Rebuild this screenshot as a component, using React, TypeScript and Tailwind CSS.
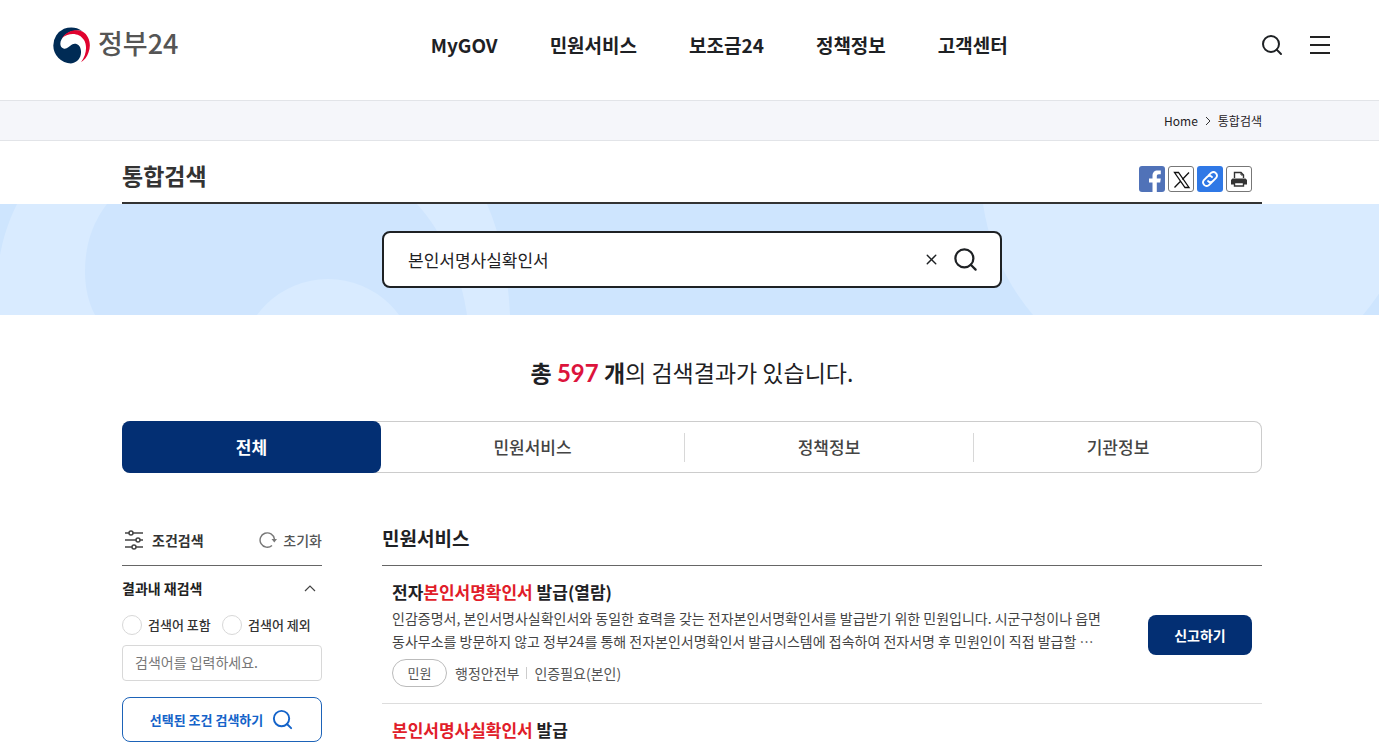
import { Search, X } from 'lucide-react';

interface Service {
  name: string;
  title: React.ReactNode;
  lines?: string[];
  agency?: string;
  note?: string;
}

const menu = ['MyGOV', '민원서비스', '보조금24', '정책정보', '고객센터'];

const services: Service[] = [
  {
    name: 'issue-online',
    title: (
      <>
        전자<em className="text-[#e11d2a] not-italic">본인서명확인서</em> 발급(열람)
      </>
    ),
    lines: [
      '인감증명서, 본인서명사실확인서와 동일한 효력을 갖는 전자본인서명확인서를 발급받기 위한 민원입니다. 시군구청이나 읍면',
      '동사무소를 방문하지 않고 정부24를 통해 전자본인서명확인서 발급시스템에 접속하여 전자서명 후 민원인이 직접 발급할 ⋯',
    ],
    agency: '행정안전부',
    note: '인증필요(본인)',
  },
  {
    name: 'issue',
    title: (
      <>
        <em className="text-[#e11d2a] not-italic">본인서명사실확인서</em> 발급
      </>
    ),
  },
];

function Logo() {
  return (
    <a href="#" className="flex items-center gap-2 text-[#555]">
      <svg className="size-[37px]" viewBox="0 0 37 37" aria-hidden="true">
        <path
          d="M29 4C24 0 17-.5 11 1.800A18.300 18.300 0 0 0 .3 18.500 18 18 0 0 0 18 36.500C24 36 28.500 31 28 24 27.500 18 23 15.500 19 17.500 15.500 19.500 14 22.500 10.500 21.500 7 20.500 6.500 16 8.500 12.500 11.500 7 19 2 29 4Z"
          fill="#002b55"
        />
        <path
          d="M9 11C14 3.500 23 1.500 29.500 4.500 36.500 8.500 38.500 18 35.500 25.500 34 30 31 33.500 28 35.200 33.500 28 34.500 19 31 13 26.500 5.500 16 5 9 11Z"
          fill="#e0032f"
        />
      </svg>
      <span className="pb-1 text-[27px] leading-8 font-medium">정부24</span>
    </a>
  );
}

function Header() {
  return (
    <header className="flex h-[100px] items-center justify-between pr-[49px] pb-2.5 pl-[53px]">
      <Logo />
      <nav className="flex gap-[52px] text-[19px] font-bold">
        {menu.map((item) => (
          <a key={item} href="#">
            {item}
          </a>
        ))}
      </nav>
      <div className="flex items-center gap-[26px]">
        <button aria-label="검색">
          <Search className="size-6" strokeWidth={2} />
        </button>
        <button aria-label="전체메뉴" className="flex w-5 flex-col gap-1.5">
          <span className="h-0.5 w-full bg-[#222]" />
          <span className="h-0.5 w-full bg-[#222]" />
          <span className="h-0.5 w-full bg-[#222]" />
        </button>
      </div>
    </header>
  );
}

function ShareButtons() {
  return (
    <div className="flex gap-[3px] pr-2.5">
      <button aria-label="페이스북" className="size-[26px] overflow-hidden rounded-[3px] bg-[#5072b8]">
        <svg viewBox="0 0 26 26" aria-hidden="true">
          <path
            d="M13.500 26V16.500H10v-4h3.500V10c0-3.700 2-5.500 5-5.500h3.300v3.800h-2c-1.500 0-2 .7-2 2v2.200h4l-.6 4h-3.400V26z"
            fill="#fff"
          />
        </svg>
      </button>
      <button aria-label="X" className="size-[26px] rounded-[3px] border border-[#777]">
        <svg viewBox="0 0 24 24" aria-hidden="true">
          <path
            d="M5.500 5.500H9.500L20 20.500h-4zM20 5.500l-6.700 7M11.800 14L5.500 20.500"
            fill="none"
            stroke="#111"
            strokeWidth="1.300"
          />
        </svg>
      </button>
      <button aria-label="링크 복사" className="size-[26px] rounded-[3px] bg-[#2f78e6]">
        <svg viewBox="0 0 26 26" aria-hidden="true">
          <g fill="none" stroke="#fff" strokeWidth="1.800" strokeLinecap="round">
            <path d="M11.500 9.500l2.800-2.800a3.600 3.600 0 0 1 5 5l-3.300 3.300a3.600 3.600 0 0 1-5 0" />
            <path d="M14.500 16.500l-2.800 2.800a3.600 3.600 0 0 1-5-5l3.300-3.300a3.600 3.600 0 0 1 5 0" />
          </g>
        </svg>
      </button>
      <button aria-label="인쇄" className="size-[26px] rounded-[3px] border border-[#777]">
        <svg viewBox="0 0 24 24" aria-hidden="true">
          <path d="M7.500 11V5.500h6.500l2.500 2.500v3" fill="none" stroke="#333" strokeWidth="1.400" />
          <path d="M14 5.500V8h2.500" fill="none" stroke="#333" />
          <path d="M5.500 11.500h13l1.500 1.500v4.500H4V13z" fill="#333" />
          <path d="M7.500 15.500h9v3.500h-9z" fill="#fff" stroke="#333" strokeWidth="1.400" />
        </svg>
      </button>
    </div>
  );
}

function SearchBanner() {
  return (
    <section className="relative bg-[#cee5fe] py-[27px] pl-[5px]">
      <svg
        className="absolute inset-0 size-full"
        viewBox="0 0 1379 111"
        preserveAspectRatio="xMidYMid slice"
        aria-hidden="true"
      >
        <path d="M17 0C8 18 3 35 0 51V111H510C508 70 501 32 487 0Z" fill="#d9ebff" />
        <path d="M107 0C90 22 85 45 85 68 85 85 89 100 95 111H467C461 70 444 30 417 0Z" fill="#cfe5fe" />
        <circle cx="328" cy="163" r="88" fill="#d9ebff" />
        <circle cx="1198" cy="-30" r="217" fill="#d9ebff" />
      </svg>
      <form className="relative mx-auto flex h-[57px] max-w-[620px] items-center rounded-lg border-2 border-[#1e2124] bg-white pr-[21px] pl-6">
        <input
          aria-label="통합검색어"
          defaultValue="본인서명사실확인서"
          className="min-w-0 flex-1 text-[17px] outline-none"
        />
        <button type="button" aria-label="지우기" className="mr-3">
          <X className="size-[17px]" strokeWidth={2} />
        </button>
        <button type="button" aria-label="검색">
          <Search className="size-[27px]" strokeWidth={2} />
        </button>
      </form>
    </section>
  );
}

function Tabs() {
  return (
    <div
      role="tablist"
      className="grid h-[52px] grid-cols-[259fr_303fr_289fr_289fr] items-center rounded-lg text-[17px] font-medium text-[#444] shadow-[inset_0_0_0_1px_#ccc]"
    >
      <button role="tab" aria-selected="true" className="h-full rounded-lg bg-[#032f73] font-bold text-white">
        전체
      </button>
      <button role="tab">민원서비스</button>
      <button role="tab" className="h-[29px] border-l border-[#d8d8d8]">
        정책정보
      </button>
      <button role="tab" className="h-[29px] border-l border-[#d8d8d8]">
        기관정보
      </button>
    </div>
  );
}

function Filter() {
  return (
    <aside className="w-[200px] shrink-0 text-[13px] text-[#333]">
      <div className="flex h-[50px] items-center justify-between border-b border-[#666] pb-px">
        <h2 className="flex items-center gap-1.5 text-sm font-bold">
          <svg className="size-6" viewBox="0 0 24 24" fill="#fff" stroke="#444" strokeWidth="1.500" aria-hidden="true">
            <path d="M3 5h18M3 12h18M3 19h18" />
            <circle cx="9" cy="5" r="2" />
            <circle cx="16" cy="12" r="2" />
            <circle cx="12" cy="19" r="2" />
          </svg>
          조건검색
        </h2>
        <button className="flex items-center gap-1.5 text-sm font-medium text-[#555]">
          <svg className="size-[18px]" viewBox="0 0 18 18" aria-hidden="true">
            <path d="M13 14.500A7.200 7.200 0 1 1 15.400 8" fill="none" stroke="#777" strokeWidth="1.400" />
            <path d="M12.500 8H18l-2.700 3.500z" fill="#777" />
          </svg>
          초기화
        </button>
      </div>
      <button className="flex h-[43px] w-full items-center justify-between pr-1.5 text-sm font-bold text-[#222]">
        결과내 재검색
        <svg className="h-2 w-3" viewBox="0 0 12 8" fill="none" stroke="#444" strokeWidth="1.200" aria-hidden="true">
          <path d="M1 7l5-5 5 5" />
        </svg>
      </button>
      <div className="mt-1 flex h-6 items-center font-medium">
        <label className="flex w-[100px] items-center gap-1.5">
          <input type="radio" name="scope" className="size-5 appearance-none rounded-full border border-[#d8d8d8]" />
          검색어 포함
        </label>
        <label className="flex items-center gap-1.5">
          <input type="radio" name="scope" className="size-5 appearance-none rounded-full border border-[#d8d8d8]" />
          검색어 제외
        </label>
      </div>
      <input
        aria-label="결과내 검색어"
        placeholder="검색어를 입력하세요."
        className="mt-2 h-9 w-full rounded border border-[#d8d8d8] px-3 pb-0.5 text-sm placeholder:text-[#777]"
      />
      <button className="mt-4 flex h-[45px] w-full items-center justify-center gap-2 rounded-lg border border-[#1d63b8] font-bold text-[#1463c9]">
        선택된 조건 검색하기
        <Search className="size-[23px]" strokeWidth={2} />
      </button>
    </aside>
  );
}

function ServiceRow({ service }: { service: Service }) {
  return (
    <li className="flex items-center gap-5 border-b border-[#ddd] px-2.5 py-4 last:border-0 last:pb-0">
      <div className="min-w-0 flex-1">
        <a href="#" className="block text-[17px] leading-5 font-bold">
          {service.title}
        </a>
        {service.lines && (
          <p className="mt-[5px] text-sm leading-[23px] text-[#444]">
            {service.lines.map((line) => (
              <span key={line} className="block truncate">
                {line}
              </span>
            ))}
          </p>
        )}
        {service.agency && (
          <div className="mt-1.5 flex items-center text-sm text-[#555]">
            <span className="mr-2 flex h-7 w-[55px] items-center justify-center rounded-full border border-[#bbb] text-[13px]">
              민원
            </span>
            <span>{service.agency}</span>
            <span className="mx-[7px] h-3 w-px bg-[#ccc]" />
            <span>{service.note}</span>
          </div>
        )}
      </div>
      {service.agency && (
        <button className="h-10 w-[104px] shrink-0 rounded-lg bg-[#032f73] text-sm font-bold text-white">
          신고하기
        </button>
      )}
    </li>
  );
}

export default function App() {
  return (
    <div className="min-h-screen bg-white font-['Noto_Sans_CJK_KR','Noto_Sans',sans-serif] text-[#1e2124]">
      <Header />
      <div className="border-y border-[#e2e4e8] bg-[#f5f6fa] pl-[5px]">
        <nav className="mx-auto flex h-[39px] max-w-[1140px] items-center justify-end gap-1.5 text-xs">
          <a href="#">Home</a>
          <svg className="h-2.5 w-2" viewBox="0 0 8 10" fill="none" stroke="#333" aria-hidden="true">
            <path d="M2 1l4 4-4 4" />
          </svg>
          <a href="#">통합검색</a>
        </nav>
      </div>
      <div className="pl-[5px]">
        <div className="mx-auto flex h-[63px] max-w-[1140px] items-center justify-between border-b-2 border-[#333] pt-3.5">
          <h1 className="pb-1.5 text-[23px] font-bold text-[#333]">통합검색</h1>
          <ShareButtons />
        </div>
      </div>
      <SearchBanner />
      <main className="pl-[5px]">
        <div className="mx-auto max-w-[1140px]">
          <p className="pt-[39px] pb-[31px] text-center text-[23px] leading-9">
            <strong>
              총 <span className="font-[Lato] text-2xl text-[#dc143c]">597</span> 개
            </strong>
            의 검색결과가 있습니다.
          </p>
          <Tabs />
          <div className="flex gap-[60px] pt-[43px]">
            <Filter />
            <section className="min-w-0 flex-1">
              <h2 className="flex h-[50px] items-center border-b border-[#666] pb-1 text-[19px] font-bold">민원서비스</h2>
              <ul>
                {services.map((service) => (
                  <ServiceRow key={service.name} service={service} />
                ))}
              </ul>
            </section>
          </div>
        </div>
      </main>
    </div>
  );
}
